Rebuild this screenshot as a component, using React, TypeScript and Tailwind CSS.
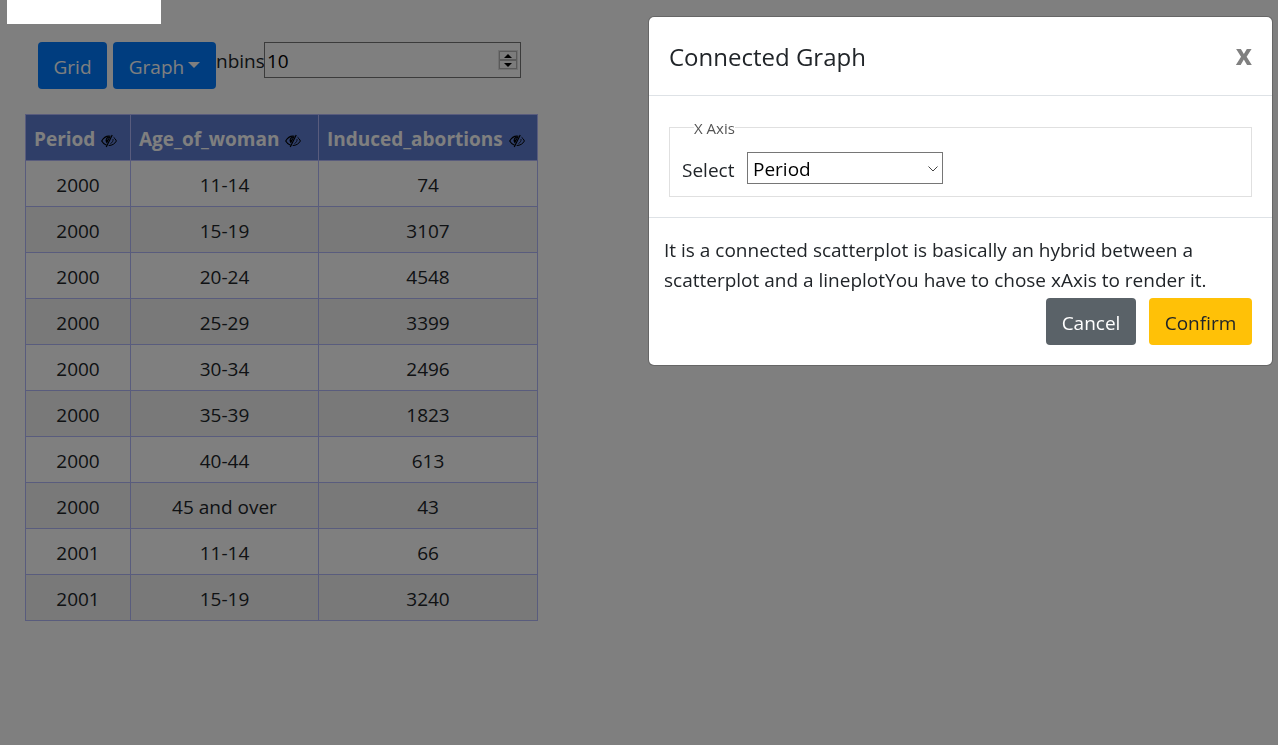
import { useState } from "react";

const columns = [
  { name: "Period", width: "w-[105px]" },
  { name: "Age_of_woman", width: "w-[188px]" },
  { name: "Induced_abortions", width: "w-[219px]" },
];

const rows = [
  ["2000", "11-14", "74"],
  ["2000", "15-19", "3107"],
  ["2000", "20-24", "4548"],
  ["2000", "25-29", "3399"],
  ["2000", "30-34", "2496"],
  ["2000", "35-39", "1823"],
  ["2000", "40-44", "613"],
  ["2000", "45 and over", "43"],
  ["2001", "11-14", "66"],
  ["2001", "15-19", "3240"],
];

function HideIcon() {
  return (
    <svg width="16" height="14" viewBox="0 0 16 14" fill="none" stroke="black" aria-hidden="true">
      <path d="M9.5 2.300C5.800 1.600 2.700 3.400.7 7c1.200 2.200 2.900 3.600 4.900 4.200" strokeWidth="1.100" />
      <path d="M12.600 3.300C13.900 4.200 14.800 5.500 15.400 7c-1.700 2.900-4.300 4.500-7.700 4.500" strokeWidth="1" />
      <path d="M9.300 3C6.300 2.300 4.500 4.200 4.600 6.500c.1 1.400.6 2.200 1.300 2.900z" fill="black" stroke="none" />
      <path d="M6.200 5.700c.1-.8.6-1.300 1.300-1.500" stroke="#5e7dd0" strokeWidth=".8" />
      <path d="M11.200 1 5.200 13" strokeWidth="1.200" />
      <path d="M12 5c.3 1.900-.7 3.600-2.600 4.700" strokeWidth=".8" />
    </svg>
  );
}

function Toolbar() {
  const [bins, setBins] = useState(10);
  return (
    <div className="flex items-start pl-[13px] text-[19px]">
      <button type="button" className="mr-1.5 h-[47px] w-[69px] rounded bg-[#007bff] pt-1 text-white">
        Grid
      </button>
      <button
        type="button"
        className="flex h-[47px] w-[103px] items-center justify-center gap-1 rounded bg-[#007bff] pt-1 text-white"
      >
        Graph
        <svg width="12" height="6" viewBox="0 0 12 6" fill="currentColor" className="mb-1.5" aria-hidden="true">
          <path d="M0 0h12L6 6z" />
        </svg>
      </button>
      <label htmlFor="nbins" className="w-12 leading-[38px]">
        nbins
      </label>
      <div className="relative">
        <input
          id="nbins"
          type="number"
          value={bins}
          onChange={(e) => setBins(Number(e.target.value))}
          className="h-9 w-[257px] border border-[#767676] bg-white px-0.5 pt-0.5 text-black [appearance:textfield] [&::-webkit-inner-spin-button]:appearance-none"
        />
        <div className="absolute top-2 right-[3px] flex flex-col border border-[#e0e0e0]">
          <button
            type="button"
            aria-label="Increase"
            onClick={() => setBins(bins + 1)}
            className="flex h-[9px] w-[18px] items-center justify-center border border-[#b4b4b4] bg-[#f8f8f8]"
          >
            <svg width="8" height="4" viewBox="0 0 8 4" aria-hidden="true">
              <path d="M4 0 8 4H0z" />
            </svg>
          </button>
          <button
            type="button"
            aria-label="Decrease"
            onClick={() => setBins(bins - 1)}
            className="flex h-[9px] w-[18px] items-center justify-center border border-[#b4b4b4] bg-[#f8f8f8]"
          >
            <svg width="8" height="4" viewBox="0 0 8 4" aria-hidden="true">
              <path d="M0 0h8L4 4z" />
            </svg>
          </button>
        </div>
      </div>
    </div>
  );
}

function DataTable() {
  return (
    <table className="mt-[25px] table-fixed border-collapse text-center text-[19px]">
      <thead>
        <tr className="h-[46px] bg-[#5e7dd0] text-white">
          {columns.map((c) => (
            <th key={c.name} scope="col" className={`${c.width} border border-[#b3b9fb] p-0 font-bold`}>
              <span className="flex items-center gap-1.5 pt-1 pl-2">
                {c.name}
                <button type="button" aria-label={`Hide ${c.name}`} className="pt-0.5">
                  <HideIcon />
                </button>
              </span>
            </th>
          ))}
        </tr>
      </thead>
      <tbody>
        {rows.map((row) => (
          <tr key={row.join()} className="h-[46px] even:bg-[#f2f2f2]">
            {row.map((cell, i) => (
              <td key={columns[i].name} className="border border-[#b3b9fb] p-0 pt-1">
                {cell}
              </td>
            ))}
          </tr>
        ))}
      </tbody>
    </table>
  );
}

function GraphDialog() {
  return (
    <div
      role="dialog"
      aria-modal="true"
      aria-labelledby="dialog-title"
      className="w-[625px] max-w-full rounded-md border border-black/20 bg-white bg-clip-padding text-[19px]"
    >
      <header className="flex h-[79px] items-start justify-between border-b border-[#dee2e6] px-5 pt-5">
        <h5 id="dialog-title" className="pt-0.5 text-2xl leading-9">
          Connected Graph
        </h5>
        <button type="button" aria-label="Close" className="text-[28px] leading-[34px] font-bold text-[#808080]">
          x
        </button>
      </header>
      <div className="border-b border-[#dee2e6] p-5 pt-[21px]">
        <fieldset className="border border-[#e0e0e0] px-3 pb-[11px]">
          <legend className="ml-3 pt-0.5 text-[15px] leading-[18px] text-[#555555]">X Axis</legend>
          <div className="flex items-center pt-[15px]">
            <label htmlFor="x-axis" className="w-[65px] pt-1">
              Select
            </label>
            <div className="relative">
              <select
                id="x-axis"
                defaultValue="Period"
                className="block h-8 w-[196px] appearance-none border border-[#767676] bg-white pt-0.5 pl-[5px] text-black"
              >
                {columns.map((c) => (
                  <option key={c.name}>{c.name}</option>
                ))}
              </select>
              <svg
                width="10"
                height="6"
                viewBox="0 0 10 6"
                fill="none"
                stroke="#444"
                className="pointer-events-none absolute top-3.5 right-[5px]"
                aria-hidden="true"
              >
                <path d="M.5.5 5 5 9.500.5" />
              </svg>
            </div>
          </div>
        </fieldset>
      </div>
      <footer className="px-[15px] pt-[17px] pb-5">
        <p className="leading-[30px]">
          It is a connected scatterplot is basically an hybrid between a scatterplot and a lineplotYou have to chose
          xAxis to render it.
        </p>
        <div className="mt-[3px] flex justify-end gap-[13px] pr-[5px]">
          <button type="button" className="h-[47px] w-[90px] rounded bg-[#5a6268] pt-1 text-white">
            Cancel
          </button>
          <button type="button" className="h-[47px] w-[103px] rounded bg-[#ffc107] pt-1 text-[#212529]">
            Confirm
          </button>
        </div>
      </footer>
    </div>
  );
}

export default function App() {
  return (
    <div className="min-h-screen bg-white font-['Open_Sans',sans-serif] text-[#212529]">
      <main className="pt-[42px] pl-[25px]">
        <Toolbar />
        <DataTable />
      </main>
      <div className="fixed inset-0 flex items-start justify-end bg-black/50 pt-4 pr-[5px]">
        <GraphDialog />
      </div>
      <div className="fixed top-0 left-[7px] h-6 w-[154px] bg-white" />
    </div>
  );
}
